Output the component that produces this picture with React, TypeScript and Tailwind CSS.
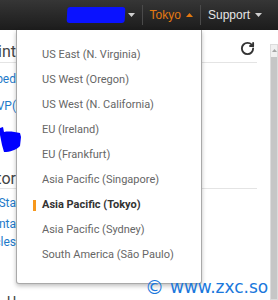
import { RotateCw } from 'lucide-react'

const regions = [
  'US East (N. Virginia)',
  'US West (Oregon)',
  'US West (N. California)',
  'EU (Ireland)',
  'EU (Frankfurt)',
  'Asia Pacific (Singapore)',
  'Asia Pacific (Tokyo)',
  'Asia Pacific (Sydney)',
  'South America (São Paulo)',
]

function Caret({ up = false, color = '#cfcfcf', gap = 'ml-[5px]' }: { up?: boolean; color?: string; gap?: string }) {
  return (
    <svg width="7" height="4" viewBox="0 0 7 4" className={gap}>
      <path d={up ? 'M0 4 L3.5 0 L7 4 Z' : 'M0 0 L7 0 L3.5 4 Z'} fill={color} />
    </svg>
  )
}

export default function App() {
  const current = 'Asia Pacific (Tokyo)'

  return (
    <div className="relative w-[278px] h-[300px] overflow-hidden bg-white font-['Roboto','Liberation_Sans',sans-serif]">
      {/* top bar */}
      <div className="h-[30px] flex items-center justify-end pr-[16px] bg-gradient-to-b from-[#363636] to-[#1c1c1c] text-[12px]">
        <div className="flex items-center h-full pr-[7px]">
          <span className="w-[58px] h-[16px] bg-[#0a12ff] rounded-[3px] -skew-x-3" />
          <Caret gap="ml-[3px]" />
        </div>
        <div className="w-px h-[20px] bg-[#4a4a4a]" />
        <div className="flex items-center px-[7px] text-[#e47911] font-['Liberation_Sans',sans-serif]">
          Tokyo
          <Caret up color="#e47911" />
        </div>
        <div className="w-px h-[20px] bg-[#4a4a4a]" />
        <div className="flex items-center pl-[7px] text-[#e6e6e6] font-['Liberation_Sans',sans-serif]">
          Support
          <Caret />
        </div>
      </div>

      {/* page behind the menu */}
      <div className="flex">
        <div className="w-[270px] pr-[13px]">
          <div className="flex justify-between h-[33px] border-b border-[#e4e4e4]">
            <div className="self-end pb-[1px] w-[16px] flex justify-end overflow-hidden whitespace-nowrap text-[16px] leading-[18px] text-[#444]">
              Service Maint
            </div>
            <RotateCw size={15} strokeWidth={3} className="mt-[11px] mr-[2px] text-[#333]" />
          </div>
          <div className="w-[16px] flex flex-col items-end overflow-hidden whitespace-nowrap text-[12px] leading-[16px] text-[#1e7ac9]">
            <div className="mt-[8px]">Subscribed</div>
            <div className="mt-[11px]">https://VP(</div>
            <div className="mt-[56px] text-[16px] leading-[18px] text-[#444]">Monitor</div>
          </div>
          <div className="border-b border-[#e4e4e4]" />
          <div className="w-[16px] flex flex-col items-end overflow-hidden whitespace-nowrap text-[12px] leading-[16px] text-[#1e7ac9]">
            <div className="mt-[6px]">Sta</div>
            <div className="mt-[5px]">Conta</div>
            <div className="mt-[2px]">Articles</div>
            <div className="mt-[44px] text-[14px] text-[#444]">U</div>
          </div>
        </div>
        <div className="mt-[14px] w-[8px] h-[256px] border border-[#dcdcdc] bg-[#f0f0f0] flex flex-col items-center">
          <svg width="5" height="3" viewBox="0 0 5 3" className="mt-[4px]">
            <path d="M0 3 L2.5 0 L5 3 Z" fill="#a5a5a5" />
          </svg>
          <div className="mt-[5px] w-full flex-1 bg-[#c6c6c6]" />
        </div>
      </div>

      {/* region menu */}
      <div className="absolute left-[16px] top-[30px] w-[186px] h-[254px] bg-white border border-t-0 border-[#a9a9a9] rounded-b-[3px] shadow-[0_2px_4px_rgba(0,0,0,0.25)] pt-[13px]">
        {regions.map((r) => (
          <div key={r} className="relative h-[25px] flex items-center pl-[25px] text-[11px] whitespace-nowrap">
            {r === current && <span className="absolute left-[16px] top-[7px] w-[3px] h-[11px] bg-[#f7981d]" />}
            <span className={r === current ? 'font-bold text-[#333]' : 'text-[#666]'}>{r}</span>
          </div>
        ))}
      </div>

      {/* blue scribble over the page */}
      <svg className="absolute left-0 top-[127px]" width="22" height="27" viewBox="0 0 22 27">
        <path d="M0 1 L3 0 L4 5 C9 4 15 5 20 6 L21 10 L20 19 C16 23 10 25 4 25 L2 18 L0 8 Z" fill="#0000ff" />
      </svg>

      {/* watermark */}
      <div className="absolute left-[145px] top-[278px] flex items-center gap-[6px] text-[#1a78dc] font-['DejaVu_Sans',sans-serif] text-[17px] leading-none">
        <span className="text-[19px]">©</span>
        <span>www.zxc.so</span>
      </div>
    </div>
  )
}
